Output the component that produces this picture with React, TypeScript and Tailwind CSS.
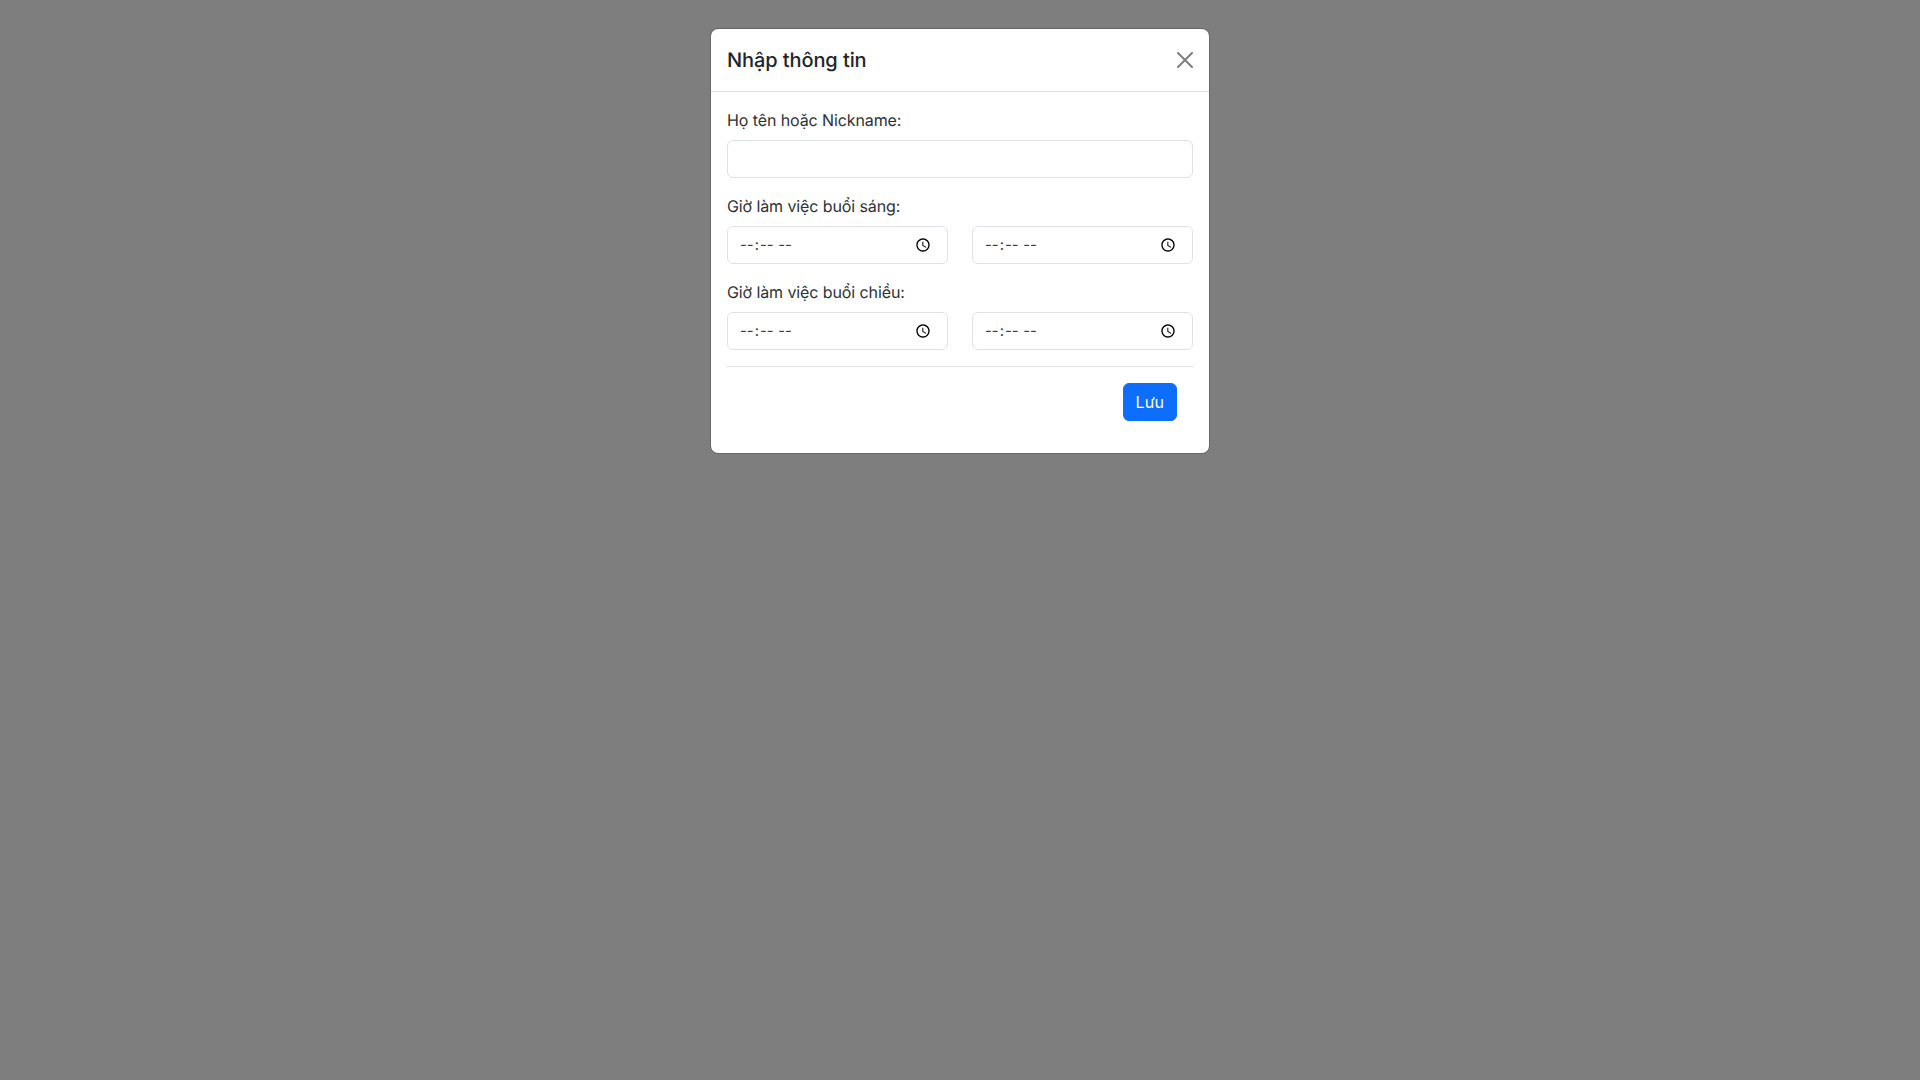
export default function App() {
  const fieldClass =
    "block w-full h-[38px] rounded-[6px] border border-[#dee2e6] bg-white px-3 py-1.5 text-base leading-6 text-[#212529] font-['Inter',sans-serif]";
  const timeClass =
    "block w-full h-[38px] rounded-[6px] border border-[#dee2e6] bg-white px-3 py-1.5 text-[14.8px] leading-6 text-[#3a3e42] font-['Inter',sans-serif] [&::-webkit-datetime-edit]:block [&::-webkit-datetime-edit]:p-0 [&::-webkit-datetime-edit]:-ml-px [&::-webkit-date-and-time-value]:m-0 [&::-webkit-date-and-time-value]:h-6 [&::-webkit-date-and-time-value]:min-w-[85px] [&::-webkit-calendar-picker-indicator]:w-4 [&::-webkit-calendar-picker-indicator]:h-4 [&::-webkit-calendar-picker-indicator]:p-[3.2px] [&::-webkit-calendar-picker-indicator]:mr-[1.2px]";
  const TimeRow = () => (
    <div className="flex gap-[24px]">
      <div className="flex-1 min-w-0">
        <input type="time" className={timeClass} />
      </div>
      <div className="flex-1 min-w-0">
        <input type="time" className={timeClass} />
      </div>
    </div>
  );
  const labelClass = "block mb-2 text-base leading-6 tracking-[-0.1px] text-[#2e3236]";
  return (
    <div className="min-h-screen bg-[#7e7e7e] pt-[28px] font-['Inter',sans-serif] [text-rendering:geometricPrecision]">
      <div className="mx-auto w-[500px] rounded-[8px] border border-[rgba(0,0,0,0.175)] bg-white bg-clip-padding">
        <div className="flex items-center justify-between border-b border-[#dee2e6] p-4">
          <h5 className="text-[20px] leading-[30px] font-medium tracking-[-0.09px] text-[#212529]">Nhập thông tin</h5>
          <button className="p-1 -my-2 -mr-1 ml-auto opacity-50 bg-transparent border-0" aria-label="Close">
            <svg viewBox="0 0 16 16" className="w-4 h-4 block" fill="#000">
              <path d="M.293.293a1 1 0 0 1 1.414 0L8 6.586 14.293.293a1 1 0 1 1 1.414 1.414L9.414 8l6.293 6.293a1 1 0 0 1-1.414 1.414L8 9.414l-6.293 6.293a1 1 0 0 1-1.414-1.414L6.586 8 .293 1.707a1 1 0 0 1 0-1.414z" />
            </svg>
          </button>
        </div>
        <div className="p-4">
          <div className="mb-4">
            <label className={labelClass}>Họ tên hoặc Nickname:</label>
            <input type="text" className={fieldClass} />
          </div>
          <div className="mb-4">
            <label className={labelClass}>Giờ làm việc buổi sáng:</label>
            <TimeRow />
          </div>
          <div className="mb-4">
            <label className={labelClass}>Giờ làm việc buổi chiều:</label>
            <TimeRow />
          </div>
          <hr className="my-4 border-0 border-t border-[#dee2e6]" />
          <div className="flex justify-end pr-4 pb-4">
            <button className="h-[38px] rounded-[6px] border border-[#0d6efd] bg-[#0d6efd] px-3 text-base leading-6 text-white">
              Lưu
            </button>
          </div>
        </div>
      </div>
    </div>
  );
}
